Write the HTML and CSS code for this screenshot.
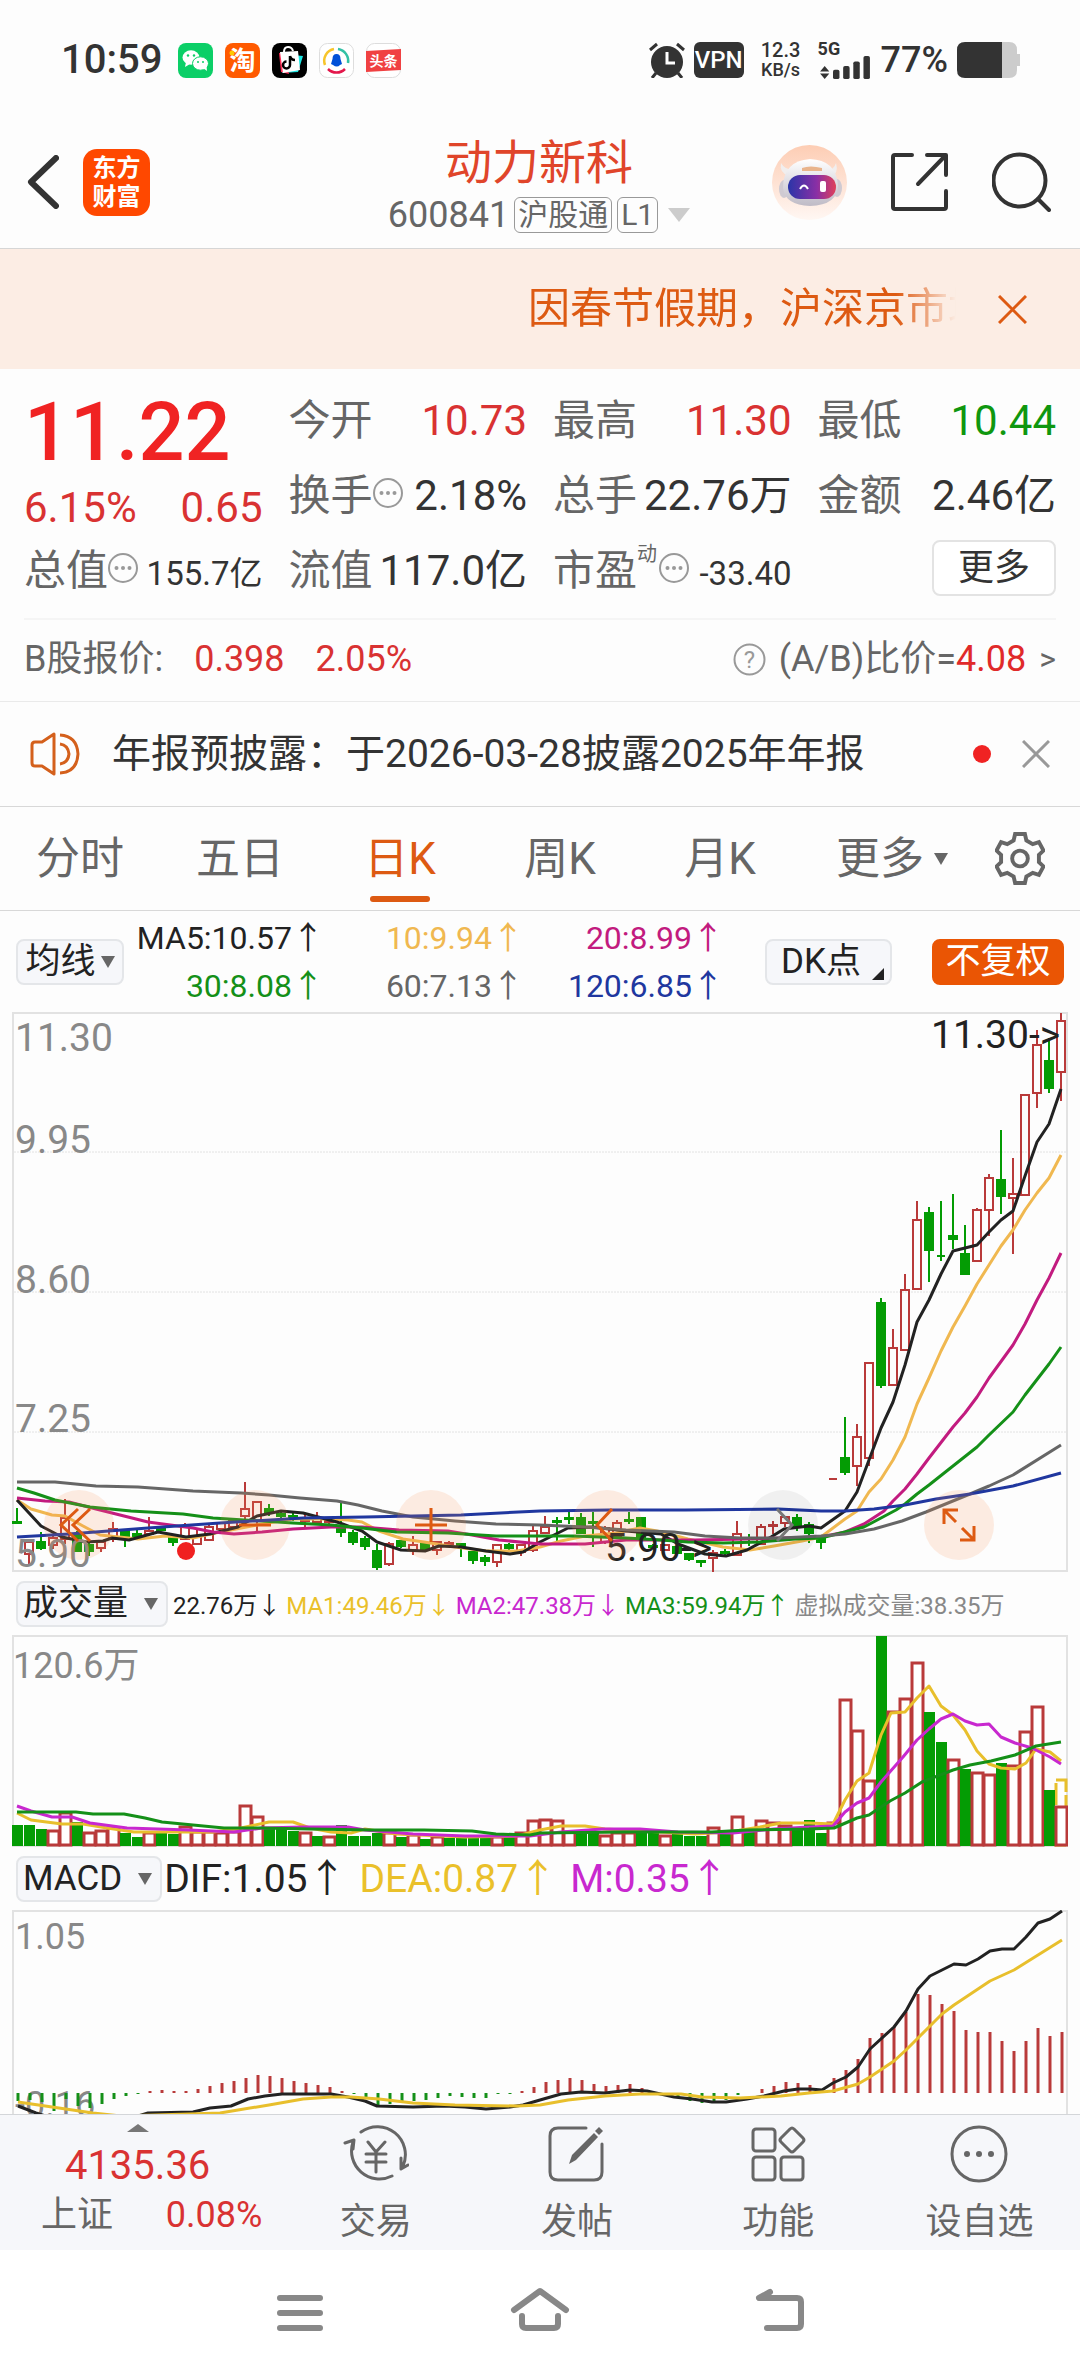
FILE: index.html
```html
<!DOCTYPE html>
<html lang="zh-CN">
<head>
<meta charset="utf-8">
<meta name="viewport" content="width=device-width">
<title>动力新科 600841</title>
<link rel="stylesheet" href="styles.css">
</head>
<body>
<div class="status">
  <div class="status-side">
    <span class="clock">10:59</span>
    <svg class="app" viewBox="0 0 35 35"><rect width="35" height="35" rx="8" fill="#0bcf67"/><ellipse cx="13" cy="14.500" rx="8.500" ry="7.200" fill="#fff"/><path d="M8 19l-1 5 5-3z" fill="#fff"/><ellipse cx="22.500" cy="20.500" rx="8" ry="6.700" fill="#fff" stroke="#0bcf67" stroke-width="1"/><path d="M25 25l4 3-.5-5z" fill="#fff"/><g fill="#0bcf67"><circle cx="10" cy="12.500" r="1.200"/><circle cx="16" cy="12.500" r="1.200"/><circle cx="20" cy="19" r="1"/><circle cx="25" cy="19" r="1"/></g></svg>
    <svg class="app" viewBox="0 0 35 35"><rect width="35" height="35" rx="8" fill="#ff5a00"/><text x="17.500" y="27" text-anchor="middle" font-size="26" font-weight="700" fill="#fff">淘</text><circle cx="7" cy="10" r="2.500" fill="#ffc800"/></svg>
    <svg class="app" viewBox="0 0 35 35"><rect width="35" height="35" rx="8" fill="#000"/><path d="M11 11l-1 19 16-1 5-16z" fill="#19e5e2"/><path d="M7 10l2 19 8 2-5-21z" fill="#fe2c55"/><path d="M8 9l18-1 2 19-17 3z" fill="#fff"/><path d="M12 9q0-5 4-5t5 4" fill="none" stroke="#fff" stroke-width="2"/><path d="M18 13v9a3.500 3.500 0 1 1-3.500-3.500M18 13q1 4 5 4" fill="none" stroke="#000" stroke-width="2.500"/></svg>
    <svg class="app" viewBox="0 0 35 35"><rect x=".5" y=".5" width="34" height="34" rx="8" fill="#fff" stroke="#ddd"/><g fill="none" stroke-width="2.500"><path d="M6 22a12 12 0 0 1 9-16" stroke="#f7c52b"/><path d="M19 6a12 12 0 0 1 10 14" stroke="#33c1a5"/><path d="M9 26a12 12 0 0 0 17 0" stroke="#e3174b"/></g><path d="M17.500 11q4 0 4 5l1.500 5-2 1q-3 3-7 0l-2-1 1.500-5q0-5 4-5z" fill="#0050d8"/></svg>
    <svg class="app" viewBox="0 0 35 35"><rect x=".5" y=".5" width="34" height="34" rx="8" fill="#fff" stroke="#ddd"/><path d="M0 8l35-2v21l-35 2z" fill="#f04142"/><text x="17.500" y="23" text-anchor="middle" font-size="14" font-weight="700" fill="#fff">头条</text></svg>
  </div>
  <div class="status-side status-right">
    <svg class="alarm" viewBox="0 0 36 36" fill="none" stroke="#333" stroke-width="3"><circle cx="18" cy="20" r="16" fill="#333" stroke="none"/><path d="M1 8l7-6M35 8l-7-6M7 31l-4 5M29 31l4 5"/><path d="M18 10v11h8" stroke="#fff"/></svg>
    <span class="vpn">VPN</span>
    <span class="speed"><b>12.3</b><b>KB/s</b></span>
    <span class="signal"><b>5G</b><svg viewBox="0 0 54 26" fill="#333"><path d="M0 18l5-6 5 6zM0 20l5 6 5-6z"/><rect x="14" y="16" width="7" height="10" rx="2"/><rect x="25" y="12" width="7" height="14" rx="2"/><rect x="36" y="7" width="7" height="19" rx="2"/><rect x="47" y="1" width="7" height="25" rx="2"/></svg></span>
    <span class="percent">77%</span>
    <svg class="battery" viewBox="0 0 63 36"><path d="M45 0h7q8 0 8 8v4h3v12h-3v4q0 8-8 8h-7z" fill="#ccc"/><path d="M8 0h37v36H8q-8 0-8-8V8q0-8 8-8z" fill="#333"/></svg>
  </div>
</div>

<header class="header">
  <div class="header-left">
    <button class="plain" aria-label="返回"><svg width="32" height="54" viewBox="0 0 32 54" fill="none" stroke="#333" stroke-width="6" stroke-linecap="round" stroke-linejoin="round"><path d="M29 3L4 27l25 24"/></svg></button>
    <a class="logo" href="#home">东方<br>财富</a>
  </div>
  <div class="heading">
    <h1>动力新科</h1>
    <button class="plain sub"><span>600841</span><span class="tag">沪股通</span><span class="tag">L1</span><svg class="sub-tri" viewBox="0 0 22 14"><path d="M0 0h22L11 14z" fill="#ccc"/></svg></button>
  </div>
  <div class="header-right">
    <button class="plain" aria-label="智能助手"><svg width="75" height="75" viewBox="0 0 75 75">
      <defs><linearGradient id="halo" x2="0" y2="1"><stop stop-color="#fdcdb4"/><stop offset="1" stop-color="#fff7f3"/></linearGradient><linearGradient id="visor"><stop stop-color="#2b35a8"/><stop offset=".6" stop-color="#8a2fa5"/><stop offset="1" stop-color="#e0405a"/></linearGradient><linearGradient id="shell" x2="0" y2="1"><stop stop-color="#fff"/><stop offset="1" stop-color="#bfbbc6"/></linearGradient></defs>
      <circle cx="37.500" cy="37.500" r="37.500" fill="url(#halo)"/><path d="M9 18q-2 10 8 13l5-6q-9 0-13-7zM64 18q3 10-5 14l-5-6q8-1 10-8z" fill="#f1eeee"/><ellipse cx="12" cy="44" rx="5" ry="9" fill="#cfcad2"/><ellipse cx="65" cy="43" rx="5" ry="9" fill="#cfcad2"/><path d="M11 43q0-27 27-29 26 1 28 26 0 20-28 21-25-1-27-18z" fill="url(#shell)"/><rect x="16" y="30" width="48" height="24" rx="12" fill="url(#visor)"/><path d="M30 23q8-3 20 0v3H30z" fill="#e9b48c"/><path d="M28 44q4-7 8 0" fill="none" stroke="#fff" stroke-width="2"/><rect x="48" y="36" width="6" height="11" rx="2" fill="#fff"/></svg></button>
    <button class="plain" aria-label="分享"><svg width="57" height="58" viewBox="0 0 57 58" fill="none" stroke="#333" stroke-width="4" stroke-linecap="round" stroke-linejoin="round"><path d="M21 2H4q-2 0-2 2v50q0 2 2 2h49q2 0 2-2V38M36 2h19v20M54 3L27 31"/></svg></button>
    <button class="plain" aria-label="搜索"><svg width="59" height="60" viewBox="0 0 59 60" fill="none" stroke="#333" stroke-width="4" stroke-linecap="round"><circle cx="27.500" cy="28.500" r="26"/><path d="M46 47l11 11"/></svg></button>
  </div>
</header>

<section class="banner">
  <p>因春节假期，沪深京市场</p>
  <button class="plain" aria-label="关闭公告"><svg width="29" height="29" viewBox="0 0 29 29" stroke="#dd5a12" stroke-width="3"><path d="M1 1l27 27M28 1L1 28"/></svg></button>
</section>

<section class="quote">
  <div class="price">
    <strong>11.22</strong>
    <div class="change"><span>6.15%</span><span>0.65</span></div>
  </div>
  <div class="cell"><span class="k">今开</span><span class="v red">10.73</span></div>
  <div class="cell"><span class="k">最高</span><span class="v red">11.30</span></div>
  <div class="cell"><span class="k">最低</span><span class="v green">10.44</span></div>
  <div class="cell"><span class="k">换手<svg class="dots"><use href="#i-dots"/></svg></span><span class="v">2.18%</span></div>
  <div class="cell"><span class="k">总手</span><span class="v">22.76万</span></div>
  <div class="cell"><span class="k">金额</span><span class="v">2.46亿</span></div>
  <div class="cell"><span class="k">总值<svg class="dots"><use href="#i-dots"/></svg></span><span class="v small">155.7亿</span></div>
  <div class="cell"><span class="k">流值</span><span class="v">117.0亿</span></div>
  <div class="cell"><span class="k">市盈<sup>动</sup><svg class="dots"><use href="#i-dots"/></svg></span><span class="v small">-33.40</span></div>
  <div class="cell"><button class="more">更多</button></div>
</section>

<section class="bshare">
  <span>B股报价:</span><span class="red">0.398</span><span class="red">2.05%</span>
  <a class="ratio" href="#ratio"><svg width="33" height="33" viewBox="0 0 33 33"><circle cx="16.500" cy="16.500" r="15" fill="none" stroke="#999" stroke-width="2"/><text x="16.500" y="25" font-size="24" text-anchor="middle" fill="#999">?</text></svg><span>(A/B)比价=<b>4.08</b></span><span class="gt">&gt;</span></a>
</section>

<section class="notice">
  <svg width="50" height="44" viewBox="0 0 50 44" fill="none" stroke="#d4601c" stroke-width="3" stroke-linejoin="round"><path d="M24 2v40L12 34H5q-3 0-3-3V13q0-3 3-3h7zM30 12q8 1 9 10-1 9-9 10M30 3q17 1 18 19-1 18-18 19"/></svg>
  <p>年报预披露：于2026-03-28披露2025年年报</p>
  <i class="unread"></i>
  <button class="plain" aria-label="关闭提示"><svg width="28" height="28" viewBox="0 0 28 28" stroke="#999" stroke-width="3"><path d="M1 1l26 26M27 1L1 27"/></svg></button>
</section>

<nav class="tabs">
  <button class="plain">分时</button>
  <button class="plain">五日</button>
  <button class="plain active">日K</button>
  <button class="plain">周K</button>
  <button class="plain">月K</button>
  <button class="plain">更多<svg class="tri" viewBox="0 0 14 12"><path d="M0 0h14L7 12z"/></svg></button>
  <button class="plain gear" aria-label="设置"><svg width="50" height="53" viewBox="0 0 51 54" fill="none" stroke="#666" stroke-width="4"><path d="M20.500 2h10l1.500 6.500 6.500 3.800 6.300-2 4.700 8.600-4.700 4.400v7.400l4.700 4.400-4.700 8.600-6.300-2-6.500 3.800-1.500 6.500h-10l-1.500-6.500-6.500-3.800-6.300 2-4.700-8.600 4.700-4.400v-7.400l-4.700-4.400 4.700-8.600 6.300 2 6.500-3.800z"/><circle cx="25.500" cy="27" r="8"/></svg></button>
</nav>

<section class="ma">
  <button class="chip">均线<svg class="tri" viewBox="0 0 14 12"><path d="M0 0h14L7 12z"/></svg></button>
  <div class="ma-values">
    <span class="c-ink">MA5:10.57↑</span><span class="c-sand">10:9.94↑</span><span class="c-rose">20:8.99↑</span>
    <span class="c-leaf">30:8.08↑</span><span class="c-gray">60:7.13↑</span><span class="c-navy">120:6.85↑</span>
  </div>
  <button class="chip dk">DK点<svg width="12" height="12" viewBox="0 0 12 12"><path d="M12 0v12H0z" fill="#222"/></svg></button>
  <button class="chip solid">不复权</button>
</section>

<section class="chart">
  <svg class="plot" viewBox="0 0 1056 560" role="img" aria-label="日K线图">
    <g fill="none" stroke="#e2e2e2" stroke-width="2"><rect x="1" y="1" width="1054" height="558"/><path d="M2 140H1054M2 280H1054M2 420H1054" stroke-width="1" stroke-dasharray="2 1"/></g>
    <g id="candles"></g>
    <g id="averages" class="lines"></g>
    <circle cx="174" cy="539" r="9" fill="#f02020"/>
    <g class="axis"><text x="3" y="39">11.30</text><text x="3" y="141">9.95</text><text x="3" y="281">8.60</text><text x="3" y="420">7.25</text><text x="3" y="555">5.90</text></g>
    <g class="marks"><text x="919" y="36">11.30-&gt;</text><text x="593" y="549">5.90-&gt;</text></g>
  </svg>
  <div class="tools">
    <button class="tool" aria-label="最左"><svg viewBox="-35 -35 70 70"><path d="M-1-16L-18 0-1 16M11-16L-6 0 11 16"/></svg></button>
    <button class="tool" aria-label="缩小"><svg viewBox="-35 -35 70 70"><path d="M-16 0H16"/></svg></button>
    <button class="tool" aria-label="放大"><svg viewBox="-35 -35 70 70"><path d="M-16 0H16M0-17V17"/></svg></button>
    <button class="tool" aria-label="向左"><svg viewBox="-35 -35 70 70"><path d="M5-16L-10 0 5 16"/></svg></button>
    <button class="tool off" aria-label="向右" disabled><svg viewBox="-35 -35 70 70"><path d="M-6-16L9 0-6 16"/></svg></button>
    <button class="tool" aria-label="全屏"><svg viewBox="-35 -35 70 70"><path d="M-1-15H-15V-1M-15-15L-3-3M1 15H15V1M15 15L3 3"/></svg></button>
  </div>
</section>

<section class="indicator">
  <button class="chip wide">成交量<svg class="tri" viewBox="0 0 14 12"><path d="M0 0h14L7 12z"/></svg></button>
  <div class="volume-values"><span class="c-ink">22.76万↓</span><span class="c-gold">MA1:49.46万↓</span><span class="c-violet">MA2:47.38万↓</span><span class="c-leaf">MA3:59.94万↑</span><span class="c-dim">虚拟成交量:38.35万</span></div>
</section>
<section class="chart">
  <svg class="plot" viewBox="0 0 1056 212" role="img" aria-label="成交量">
    <rect x="1" y="1" width="1054" height="210" fill="none" stroke="#e2e2e2" stroke-width="2"/>
    <g id="volumes"></g>
    <g id="volume-averages" class="lines"></g>
    <g class="axis axis-small"><text x="1" y="43">120.6万</text></g>
  </svg>
</section>

<section class="indicator">
  <button class="chip wide">MACD<svg class="tri" viewBox="0 0 14 12"><path d="M0 0h14L7 12z"/></svg></button>
  <div class="macd-values"><span class="c-ink">DIF:1.05↑</span><span class="c-gold">DEA:0.87↑</span><span class="c-violet">M:0.35↑</span></div>
</section>
<section class="chart">
  <svg class="plot" viewBox="0 0 1056 204" role="img" aria-label="MACD">
    <path d="M1 204V1H1055V204" fill="none" stroke="#e2e2e2" stroke-width="2"/>
    <g class="axis axis-small"><text x="3" y="39">1.05</text><text x="3" y="207">-0.16</text></g>
    <g id="macd"></g>
    <g id="macd-lines" class="lines"></g>
  </svg>
</section>

<footer class="dock">
  <button class="plain index">
    <svg width="22" height="8" viewBox="0 0 22 8"><path d="M0 8L11 0l11 8z" fill="#777"/></svg>
    <span class="index-value">4135.36</span>
    <span class="index-row"><span>上证</span><span class="red">0.08%</span></span>
  </button>
  <button class="plain action"><svg viewBox="0 0 66 60"><path d="M18 8a28 28 0 0 1 42 34M58 34l0 11 7-4M49 52A28 28 0 0 1 10 18M2 19l9-3-1 9M25 18l8 10 9-10M33 28v20M23 30h20M23 38h20"/></svg>交易</button>
  <button class="plain action"><svg viewBox="0 0 66 60"><path d="M42 4H14q-8 0-8 8v36q0 8 8 8h36q8 0 8-8V20"/><path d="M25 40l3-9L50 9l4 4-22 23zM51 7l4-4 4 4-4 4z" fill="#666" stroke="none"/></svg>发帖</button>
  <button class="plain action"><svg viewBox="0 0 66 60"><rect x="8" y="5" width="22" height="22" rx="3"/><rect x="8" y="33" width="22" height="23" rx="3"/><rect x="36" y="33" width="22" height="23" rx="3"/><path d="M45 5q2-2 4 0l9 9q2 2 0 4l-9 9q-2 2-4 0l-9-9q-2-2 0-4z"/></svg>功能</button>
  <button class="plain action"><svg viewBox="0 0 66 60"><circle cx="33" cy="30" r="27"/><g fill="#666" stroke="none"><circle cx="21" cy="30" r="3"/><circle cx="33" cy="30" r="3"/><circle cx="45" cy="30" r="3"/></g></svg>设自选</button>
</footer>

<nav class="system">
  <button class="plain" aria-label="最近任务"><svg viewBox="0 0 60 44"><path d="M10 7h40M10 22h40M10 37h40"/></svg></button>
  <button class="plain" aria-label="主屏幕"><svg viewBox="0 0 60 44"><path d="M4 19L30 0l26 19M12 25v8q0 4 4 4h28q4 0 4-4v-8"/></svg></button>
  <button class="plain" aria-label="返回上一页"><svg viewBox="0 0 60 44"><path d="M20 1L9 7h38q4 0 4 4v22q0 4-4 4H17"/></svg></button>
</nav>

<svg class="defs" aria-hidden="true"><symbol id="i-dots" viewBox="0 0 30 30"><circle cx="15" cy="15" r="14" fill="none" stroke="#999" stroke-width="2"/><g fill="#999"><circle cx="8.500" cy="15" r="2"/><circle cx="15" cy="15" r="2"/><circle cx="21.500" cy="15" r="2"/></g></symbol></svg>
<script src="chart.js"></script>
</body>
</html>
```
FILE: styles.css
```css
* { box-sizing: border-box; }
body {
  margin: 0;
  min-height: 100vh;
  display: flex;
  flex-direction: column;
  background: #fdfdfd;
  color: #333;
  font-family: Roboto, "Noto Sans CJK SC", sans-serif;
}
p, h1 { margin: 0; font-weight: 400; }
svg { display: block; flex: none; }
button { font: inherit; color: inherit; padding: 0; margin: 0; }
.plain { background: none; border: 0; }
.defs { position: absolute; width: 0; height: 0; }
.red { color: #d93232; }
.green { color: #0f970f; }
.tri { width: 14px; height: 12px; fill: #666; }

.c-ink { color: #222; }
.c-sand { color: #f0b850; }
.c-rose { color: #c21b7f; }
.c-leaf { color: #149018; }
.c-gray { color: #666; }
.c-navy { color: #20379f; }
.c-gold { color: #eac02a; }
.c-violet { color: #c828cf; }
.c-dim { color: #888; }

/* status bar */
.status { display: flex; justify-content: space-between; align-items: center; height: 120px; padding: 0 60px 0 61px; }
.status-side { display: flex; align-items: center; gap: 12px; }
.clock { font-size: 40px; font-weight: 500; line-height: 44px; margin-right: 4px; }
.app { width: 35px; height: 35px; }
.status-right { gap: 9px; }
.alarm { width: 36px; height: 36px; }
.vpn { width: 50px; height: 36px; border-radius: 6px; background: #333; color: #fff; font-size: 24px; font-weight: 500; line-height: 36px; text-align: center; }
.speed { display: grid; width: 56px; justify-items: center; font-size: 20px; line-height: 19px; }
.speed b { font-weight: 500; }
.speed b + b { font-size: 18px; }
.signal { display: grid; font-size: 18px; line-height: 13px; }
.signal b { font-weight: 700; }
.signal svg { width: 54px; height: 24px; }
.percent { font-size: 36px; font-weight: 500; line-height: 40px; }
.battery { width: 63px; height: 36px; }

/* title bar */
.header { display: grid; grid-template-columns: 1fr auto 1fr; align-items: center; height: 129px; padding: 0 29px 4px 27px; border-bottom: 1px solid #d6d6d6; }
.header-left { display: flex; align-items: center; gap: 24px; }
.logo { width: 67px; height: 67px; padding-top: 5px; border-radius: 14px; background: #ff4800; color: #fff; font-size: 24px; font-weight: 700; line-height: 29px; text-align: center; text-decoration: none; }
.heading { padding-top: 8px; display: grid; justify-items: center; gap: 10px; }
.heading h1 { font-size: 47px; line-height: 48px; color: #e0452a; }
.sub { display: flex; align-items: center; gap: 5px; font-size: 36px; line-height: 36px; color: #666; }
.tag { height: 36px; padding: 0 3px; border: 1px solid #999; border-radius: 6px; font-size: 30px; line-height: 34px; }
.sub-tri { width: 22px; height: 14px; margin-left: 5px; }
.header-right { display: flex; align-items: center; justify-content: flex-end; gap: 44px; }

/* scrolling announcement */
.banner { display: flex; align-items: center; justify-content: flex-end; height: 120px; padding: 0 53px; gap: 42px; background: #fcede4; color: #dd5a12; }
.banner p { width: 428px; font-size: 42px; line-height: 60px; white-space: nowrap; overflow: hidden; -webkit-mask-image: linear-gradient(to right, #000 86%, transparent); mask-image: linear-gradient(to right, #000 86%, transparent); }

/* quote grid */
.quote { display: grid; grid-template-columns: repeat(4, 1fr); grid-auto-rows: 75px; column-gap: 26px; margin: 0 24px; padding: 14px 0 10px; border-bottom: 2px solid #f5f5f5; }
.price { grid-row: span 2; padding-top: 8px; color: #f02323; }
.price strong { display: block; font-size: 81px; font-weight: 500; line-height: 84px; }
.change { display: flex; justify-content: space-between; font-size: 42px; line-height: 66px; color: #d93232; }
.cell { display: flex; justify-content: space-between; align-items: baseline; font-size: 42px; line-height: 75px; white-space: nowrap; }
.k { display: flex; align-items: center; color: #666; }
.k sup { align-self: flex-start; font-size: 20px; line-height: 42px; margin-right: 2px; }
.dots { width: 30px; height: 30px; margin-bottom: 6px; }
.v.small { font-size: 33px; }
.more { width: 124px; height: 56px; margin: 7px 0 0 auto; background: #fff; border: 2px solid #e3e3e3; border-radius: 8px; font-size: 36px; line-height: 50px; }

.bshare { display: flex; align-items: center; gap: 31px; padding: 0 24px 2px; font-size: 36px; line-height: 79px; color: #666; border-bottom: 1px solid #eaeaea; }
.ratio { display: flex; align-items: center; gap: 13px; margin-left: auto; color: inherit; text-decoration: none; }
.ratio b { font-weight: 400; color: #e02a2a; }
.gt { font-size: 32px; }

.notice { display: flex; align-items: center; height: 105px; padding: 0 30px; font-size: 39px; border-bottom: 1px solid #d8d8d8; }
.notice p { flex: 1; margin-left: 32px; line-height: 60px; white-space: nowrap; }
.unread { width: 18px; height: 18px; margin-right: 31px; border-radius: 50%; background: #f02323; }

/* period tabs */
.tabs { display: flex; height: 104px; border-bottom: 1px solid #d8d8d8; }
.tabs button { position: relative; flex: 4; display: flex; align-items: center; justify-content: center; font-size: 44px; line-height: 64px; color: #666; }
.tabs .gear { flex: 3; }
.tabs .tri { margin: 0 -24px 0 10px; }
.tabs .active { color: #dd5a12; }
.tabs .active::after { content: ""; position: absolute; bottom: 8px; left: 50%; width: 60px; height: 6px; margin-left: -30px; border-radius: 3px; background: #dd5a12; }

/* indicator headers */
.chip { display: flex; align-items: center; justify-content: center; gap: 5px; height: 46px; background: #f6f7fa; border: 2px solid #e4e6e9; border-radius: 8px; color: #222; font-size: 35px; line-height: 42px; }
.ma { display: flex; align-items: center; height: 101px; padding: 0 16px; }
.ma > .chip:first-child { width: 108px; }
.ma-values { display: grid; grid-template-columns: repeat(3, 200px); justify-items: end; font-size: 32px; line-height: 48px; }
.ma .dk { width: 127px; margin: 0 40px 0 auto; padding-left: 8px; }
.dk svg { align-self: flex-end; margin: 0 0 3px 6px; }
.ma .solid { width: 132px; background: #ea5504; border-color: #ea5504; color: #fff; }
.indicator { display: flex; align-items: center; height: 63px; padding: 0 16px; }
.chip.wide { justify-content: space-between; gap: 16px; padding: 0 8px 0 5px; }
.volume-values { display: flex; gap: 5px; margin-left: 5px; font-size: 24px; white-space: nowrap; }
.macd-values { display: flex; gap: 13px; margin-left: 2px; font-size: 39px; line-height: 44px; }

/* charts */
.chart { position: relative; margin: 0 12px; }
.plot { width: 100%; height: auto; overflow: hidden; }
.axis text { font-size: 39px; fill: #888; }
.axis-small text { font-size: 36px; }
.marks text { font-size: 39px; fill: #222; }
.lines path { fill: none; stroke-width: 3; stroke-linejoin: round; }
.up { fill: none; stroke: #b93a3a; stroke-width: 2; }
.down { fill: #049c04; stroke: #049c04; stroke-width: 2; }
.vol-up { fill: #fff; stroke: #b93a3a; stroke-width: 3; }
.vol-down { fill: #049c04; }
.vol-est { fill: #fff; stroke: #e8bf2c; stroke-width: 3; stroke-dasharray: 22 3; }
.tools { position: absolute; left: 3%; right: 7%; bottom: 12px; display: flex; justify-content: space-between; }
.tool { width: 70px; height: 70px; border: 0; border-radius: 50%; background: rgba(250, 140, 80, .16); }
.tool svg { width: 70px; height: 70px; fill: none; stroke: #dd5a12; stroke-width: 3; }
.tool.off { background: rgba(0, 0, 0, .05); }
.tool.off svg { stroke: #777; }

/* bottom dock */
.dock { display: flex; height: 136px; background: #f6f7fa; border-top: 1px solid #d4d6d9; color: #666; }
.index { flex: 275; display: flex; flex-direction: column; align-items: center; padding-top: 9px; }
.index-value { margin-top: 10px; font-size: 40px; line-height: 48px; color: #d93232; }
.index-row { display: flex; align-self: stretch; justify-content: space-between; padding: 0 13px 0 41px; font-size: 36px; line-height: 50px; }
.action { flex: 201; display: flex; flex-direction: column; align-items: center; padding-top: 9px; font-size: 36px; line-height: 50px; }
.action svg { width: 66px; height: 60px; margin-bottom: 13px; fill: none; stroke: #666; stroke-width: 3; stroke-linejoin: round; stroke-linecap: round; }

/* system navigation */
.system { flex: 1; display: flex; justify-content: center; align-items: center; gap: 180px; min-height: 120px; background: #fff; }
.system svg { width: 60px; height: 44px; overflow: visible; fill: none; stroke: #888; stroke-width: 6; stroke-linecap: round; stroke-linejoin: round; }
```
FILE: chart.js
```js
// Every series has one entry per trading day, 12 units apart.
const NS = "http://www.w3.org/2000/svg";
const x = i => 5 + 12 * i;

function add(id, tag, attrs) {
  const node = document.createElementNS(NS, tag);
  for (const key in attrs) node.setAttribute(key, attrs[key]);
  document.getElementById(id).appendChild(node);
}

// direction, high, body top, body bottom, low
const candles = `g 496 510 511 512;r 527 530 542 552;g 520 530 536 538;r 524 526 533 537;r 487 506 527 532;g 519 522 539 540;g 531 533 539 544;r 529 530 536 540;r 510 517 527 530;g 517 519 524 535;g 516 522 524 525;r 505 519 522 523;g 515 516 518 519;g 525 526 530 534;r 511 515 527 528;r 517 524 532 533;r 512 515 528 529;r 510 511 517 519;r 506 508 515 516;r 470 497 504 509;r 490 490 509 519;g 492 497 500 504;g 500 502 504 506;g 500 504 506 509;r 502 507 509 515;r 500 507 510 512;r 508 508 510 513;g 490 515 520 525;g 518 521 530 533;g 524 527 534 538;g 532 539 555 558;r 530 532 552 554;g 528 529 534 536;r 524 533 538 543;g 531 532 537 538;r 529 530 538 543;r 529 531 532 534;g 531 532 535 545;g 539 540 548 552;g 543 546 549 554;r 532 533 550 555;g 531 533 536 538;r 532 533 540 544;r 514 519 538 540;r 504 515 521 522;g 505 509 510 530;g 499 506 507 512;g 501 506 521 522;g 500 510 511 535;r 514 516 530 532;r 508 511 525 526;g 500 508 509 512;g 506 506 527 527;g 532 534 535 537;r 533 533 538 539;g 534 535 541 542;g 541 542 547 549;g 548 549 550 555;r 538 541 546 560;g 537 540 541 544;r 509 522 543 544;g 522 526 527 534;r 512 515 532 532;r 509 513 514 522;r 504 505 511 515;g 502 506 514 519;g 510 513 521 531;g 525 527 530 537;r 467 467 467 467;g 405 446 460 463;r 412 425 454 474;r 351 351 446 454;g 286 291 373 376;r 317 336 373 373;r 262 278 338 338;r 189 208 277 277;g 195 201 238 270;g 189 244 244 249;g 182 224 227 237;g 213 242 262 263;r 196 198 249 249;r 162 166 198 224;g 118 168 184 202;r 146 182 186 242;r 83 83 183 183;r 18 33 81 96;g 26 49 76 81;r 1 9 60 89`;
candles.split(";").forEach((row, i) => {
  const [dir, high, top, bottom, low] = row.split(" ");
  add("candles", "path", {
    class: dir === "r" ? "up" : "down",
    d: `M${x(i)} ${high}V${top}M${x(i)} ${bottom}V${low}M${x(i) - 4} ${top}h8V${bottom}h-8z`
  });
});

const volumes = "g190 g190 g194 r196 r178 g187 r198 r196 r193 g198 g202 r198 g198 g199 r192 r197 r197 r198 r197 r171 r182 g192 g194 g196 r198 g201 r202 g190 g201 g201 g198 r198 g202 r200 g204 r202 g203 g203 g203 g203 r202 g201 r198 r186 r185 r186 r197 g197 g197 r201 r198 r198 g197 g198 r201 g198 g201 g201 r193 g197 r182 g197 r186 r188 r191 g193 g185 g198 r188 r65 r96 r146 g1 r77 r64 r28 g77 g107 r125 g134 r138 r140 g128 r131 r97 r72 g155 r172";
add("volumes", "rect", { class: "vol-est", x: x(87) - 5, y: 145, width: 10, height: 65 });
volumes.split(" ").forEach((v, i) => {
  const top = +v.slice(1);
  if (v[0] === "r") add("volumes", "rect", { class: "vol-up", x: x(i) - 5, y: top, width: 11, height: 210 - top });
  else add("volumes", "rect", { class: "vol-down", x: x(i) - 5, y: top, width: 11, height: 211 - top });
});

const macd = [191, 190, 192, 201, 189, 196, 198, 194, 189, 186, 184, 181, 180, 181, 181, 179, 176, 173, 171, 168, 165, 166, 168, 171, 173, 175, 177, 181, 184, 188, 196, 194, 193, 191, 190, 188, 186, 187, 188, 188, 184, 184, 181, 177, 172, 170, 168, 170, 174, 176, 175, 174, 178, 183, 185, 188, 191, 193, 192, 190, 185, 183, 179, 176, 172, 173, 175, 180, 168, 160, 149, 128, 123, 117, 102, 84, 85, 94, 101, 120, 122, 122, 131, 141, 131, 118, 126, 122];
macd.forEach((end, i) => add("macd", "path", {
  d: `M${x(i) + 1} 183V${end}`, "stroke-width": 3, stroke: end < 183 ? "#b93a3a" : "#149018"
}));

function line(id, color, points) {
  add(id, "path", { stroke: color, d: "M" + points });
}
line("averages", "#f0b850", "5,488 19,497 40,503 53,504 71,514 88,523 126,527 153,524 181,526 208,520 250,512 281,507 319,507 336,508 350,510 367,519 391,527 412,530 443,535 474,539 505,539 528,535 549,529 573,524 604,521 628,516 645,519 676,527 711,535 738,538 762,534 790,529 809,525 833,507 845,499 857,480 869,467 881,448 893,425 905,392 917,366 929,339 941,315 953,294 965,272 977,253 989,234 1001,218 1013,198 1025,181 1037,166 1049,143");
line("averages", "#222", "5,488 29,514 50,525 74,530 91,529 100,526 117,528 146,520 174,525 198,522 226,515 245,504 269,499 291,501 325,510 350,519 365,530 389,538 413,539 427,534 449,535 474,539 498,542 511,540 528,530 556,516 580,515 614,519 649,522 666,532 693,542 714,544 735,538 759,525 772,517 797,514 809,516 833,499 845,480 857,448 869,416 881,390 893,353 905,310 917,288 929,262 941,239 965,233 977,220 989,208 1001,199 1013,164 1025,130 1037,112 1049,77");
line("averages", "#c21b7f", "5,486 33,489 57,490 84,497 112,504 136,510 181,516 201,520 222,522 250,520 281,517 319,515 350,515 387,518 436,519 460,523 487,528 518,531 528,532 573,532 614,528 683,528 735,527 809,525 833,520 852,512 872,499 881,489 893,477 905,462 917,446 941,415 953,401 965,385 977,366 1001,333 1013,312 1025,288 1037,266 1049,241");
line("averages", "#149018", "5,476 22,481 43,488 78,495 119,499 171,502 201,506 250,509 281,511 319,513 350,516 384,520 436,521 484,524 518,524 562,524 614,526 649,528 676,530 711,531 748,530 783,527 809,526 833,520 852,515 884,498 893,492 905,482 917,473 941,454 965,435 977,423 1001,400 1013,383 1037,352 1049,335");
line("averages", "#666", "5,470 43,470 84,474 126,475 181,479 229,481 257,483 288,486 325,489 346,493 370,499 401,505 443,509 484,512 528,513 573,515 614,518 662,520 693,524 728,526 769,526 809,524 833,522 862,517 890,509 914,500 958,482 977,474 1001,463 1049,433");
line("averages", "#20379f", "5,525 57,522 136,516 208,511 291,506 353,505 401,504 449,503 528,499 597,498 673,498 766,497 809,499 833,499 862,497 893,493 924,487 958,482 1001,474 1049,461");

line("volume-averages", "#e8bf2c", "5,178 19,185 50,189 71,189 95,193 122,197 171,197 201,197 229,193 257,187 281,187 298,193 319,197 339,198 353,194 384,199 453,202 505,201 528,195 549,191 573,191 593,194 649,197 683,199 717,197 748,192 769,188 797,188 821,189 833,165 845,146 857,138 869,100 879,78 893,77 905,63 917,51 929,71 941,80 953,95 965,116 977,129 989,133 1003,134 1014,128 1024,114 1038,117 1049,126");
line("volume-averages", "#c828cf", "5,171 19,176 40,182 60,182 78,188 115,193 177,195 222,197 250,193 291,192 336,192 353,195 401,199 453,201 518,201 549,197 590,194 628,194 666,197 721,198 762,194 797,192 821,191 833,177 845,168 857,163 869,147 891,122 905,105 917,94 929,84 941,79 953,86 965,90 977,89 989,102 1003,108 1020,113 1038,122 1049,129");
line("volume-averages", "#149018", "5,177 64,177 81,179 112,179 133,183 150,187 181,190 212,193 250,193 298,194 360,195 412,195 460,196 484,199 518,200 528,198 614,197 700,197 735,195 797,194 822,193 845,183 857,180 878,166 893,158 910,147 941,135 958,130 979,126 1003,120 1024,111 1049,107");

line("macd-lines", "#222", "6,196 24,203 40,208 126,206 136,203 181,202 198,198 219,196 236,189 253,186 270,184 319,184 336,187 353,191 365,196 401,197 432,196 453,197 474,199 498,197 511,195 528,190 549,184 569,182 593,183 618,180 635,181 662,187 680,189 700,192 714,192 735,189 752,186 772,181 786,179 798,179 810,180 821,173 834,167 846,157 858,139 882,117 894,101 906,79 918,66 930,60 942,54 954,55 966,49 978,41 990,39 1002,39 1014,27 1026,13 1038,9 1050,1");
line("macd-lines", "#e8bf2c", "6,192 40,197 81,203 109,206 177,204 208,203 226,200 257,195 291,189 319,187 339,187 367,189 401,193 443,195 505,196 528,195 556,190 593,186 628,184 669,184 690,187 728,188 769,186 797,183 821,181 846,174 858,167 882,151 894,140 906,128 918,116 930,104 942,95 978,71 1002,60 1026,45 1050,30");
```
